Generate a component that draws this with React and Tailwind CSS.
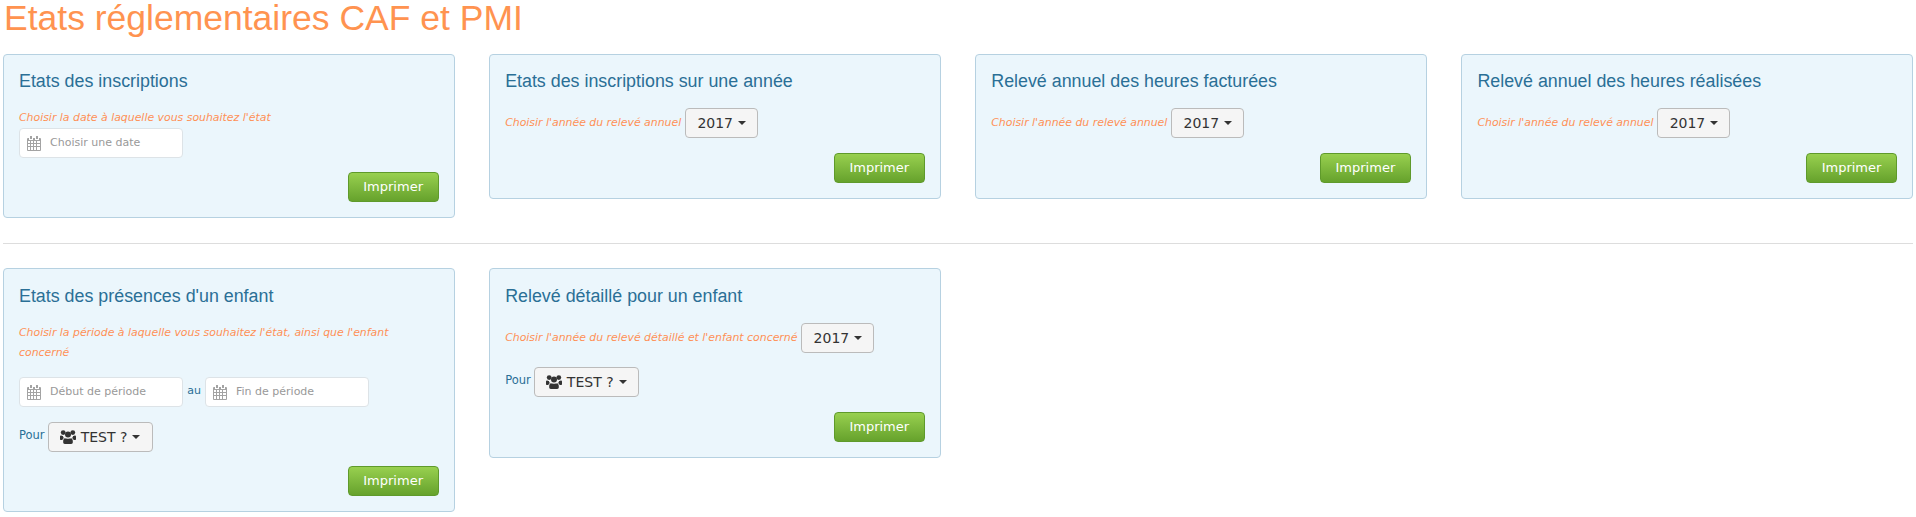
const CalendarIcon = () => (
  <svg width="14" height="15" viewBox="0 0 14 15" className="shrink-0 text-[#a3a3a3]" fill="currentColor">
    <path d="M3 0h2v3H3zM9 0h2v3H9z" />
    <path fillRule="evenodd" d="M1 2h1v2h4V2h2v2h4V2h1a1 1 0 0 1 1 1v11a1 1 0 0 1-1 1H1a1 1 0 0 1-1-1V3a1 1 0 0 1 1-1zM1 5v2h2V5zm3 0v2h2V5zm3 0v2h2V5zm3 0v2h3V5zM1 8v2h2V8zm3 0v2h2V8zm3 0v2h2V8zm3 0v2h3V8zM1 11v3h2v-3zm3 0v3h2v-3zm3 0v3h2v-3zm3 0v3h3v-3z" />
  </svg>
);

const UsersIcon = () => (
  <svg width="16" height="14" viewBox="0 0 16 14" className="mr-[5px] shrink-0" fill="#333">
    <circle cx="3.2" cy="2.6" r="2.4" />
    <circle cx="12.8" cy="2.6" r="2.4" />
    <circle cx="8" cy="4.4" r="3" />
    <path d="M0 6.5C0 5.800.5 5.400 1.200 5.600c.6.3 1.200.4 1.700.3.1.9.5 1.600 1.100 2.100C3 8.500 2.500 9.300 2.400 10H1c-.6 0-1-.4-1-1zM16 6.500c0-.7-.5-1.100-1.200-.9-.6.3-1.200.4-1.700.3-.1.9-.5 1.600-1.100 2.100 1 .5 1.500 1.300 1.600 2H15c.6 0 1-.4 1-1z" />
    <path d="M5 8.300c.9.6 5.100.6 6 0 1 .3 1.800 1.300 1.800 2.700v1.300c0 1-.6 1.700-1.600 1.700H4.800c-1 0-1.600-.7-1.600-1.700V11c0-1.400.8-2.400 1.800-2.700z" />
  </svg>
);

const DateInput = ({ placeholder }) => (
  <div className="flex h-[30px] w-[164px] items-center gap-[9px] rounded-[4px] border border-[#dde3e7] bg-white pl-[7px] font-['DejaVu_Sans',sans-serif] text-[11px] text-[#999]">
    <CalendarIcon />
    <span>{placeholder}</span>
  </div>
);

const Caret = () => (
  <span className="ml-[5px] inline-block h-0 w-0 border-x-[4px] border-t-[4px] border-x-transparent border-t-[#333]" />
);

const Dropdown = ({ children, className }) => (
  <div className={`flex h-[30px] items-center justify-center rounded-[4px] border border-[#bbb] bg-[#f5f5f5] font-['DejaVu_Sans',sans-serif] text-[14px] text-[#333] ${className}`}>
    {children}
    <Caret />
  </div>
);

const YearSelect = () => <Dropdown className="w-[73px]">2017</Dropdown>;

const ChildSelect = () => (
  <div className="flex items-center gap-[3px]">
    <span className="relative -top-[1px] font-['DejaVu_Sans',sans-serif] text-[11.500px] text-[#2a6f96]">Pour</span>
    <Dropdown className="w-[105px]">
      <UsersIcon />
      TEST ?
    </Dropdown>
  </div>
);

const Hint = ({ children }) => (
  <span className="block font-['DejaVu_Sans',sans-serif] text-[10.900px] leading-[20px] text-[#ff9056] italic">{children}</span>
);

const Card = ({ title, titleClass = '', children }) => (
  <div className="rounded-[4px] border border-[#b6d1e1] bg-[#ebf6fc] px-[15px] pt-[16px] pb-[15px]">
    <h3 className={`mb-[17px] font-['Liberation_Sans',sans-serif] text-[17.850px] leading-[20px] text-[#2a6f96] ${titleClass}`}>{title}</h3>
    {children}
    <div className="flex justify-end">
      <button className="h-[30px] w-[91px] rounded-[4px] border border-[#5f9a2b] bg-gradient-to-b from-[#98d04f] to-[#66a22c] font-['DejaVu_Sans',sans-serif] text-[13px] text-white">Imprimer</button>
    </div>
  </div>
);

const YearCard = ({ title }) => (
  <Card title={title}>
    <div className="mb-[15px] flex items-center gap-[4px]">
      <Hint>Choisir l'année du relevé annuel</Hint>
      <YearSelect />
    </div>
  </Card>
);

export default function App() {
  return (
    <div className="min-h-[517px] bg-white px-[3px]">
      <h1 className="h-[54px] pl-[1px] font-['Liberation_Sans',sans-serif] text-[35.500px] leading-[36px] text-[#ff9350]">Etats réglementaires CAF et PMI</h1>
      <div className="grid grid-cols-4 items-start gap-x-[34.500px]">
        <Card title="Etats des inscriptions">
          <div className="mb-[14px]">
            <Hint>Choisir la date à laquelle vous souhaitez l'état</Hint>
            <DateInput placeholder="Choisir une date" />
          </div>
        </Card>
        <YearCard title="Etats des inscriptions sur une année" />
        <YearCard title="Relevé annuel des heures facturées" />
        <YearCard title="Relevé annuel des heures réalisées" />
      </div>
      <hr className="mt-[25px] mb-[24px] border-t border-[#ddd]" />
      <div className="grid grid-cols-4 items-start gap-x-[34.500px]">
        <Card title="Etats des présences d'un enfant" titleClass="mt-[1px]">
          <div className="mb-[14px]">
            <Hint>Choisir la période à laquelle vous souhaitez l'état, ainsi que l'enfant concerné</Hint>
          </div>
          <div className="mb-[15px] flex items-center">
            <DateInput placeholder="Début de période" />
            <span className="relative -top-[1px] w-[22px] text-center font-['DejaVu_Sans',sans-serif] text-[11px] text-[#2a6f96]">au</span>
            <DateInput placeholder="Fin de période" />
          </div>
          <div className="mb-[14px]"><ChildSelect /></div>
        </Card>
        <Card title="Relevé détaillé pour un enfant" titleClass="mt-[1px]">
          <div className="mb-[14px] flex items-center gap-[4px]">
            <Hint>Choisir l'année du relevé détaillé et l'enfant concerné</Hint>
            <YearSelect />
          </div>
          <div className="mb-[15px]"><ChildSelect /></div>
        </Card>
      </div>
    </div>
  );
}
